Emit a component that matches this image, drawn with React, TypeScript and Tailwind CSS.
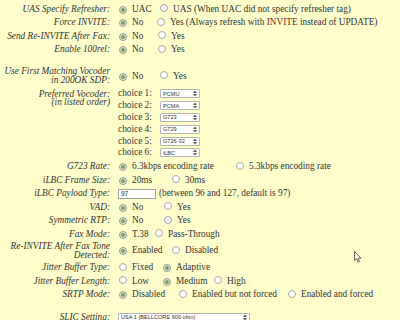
import React from "react";

function Radio({ checked }: { checked?: boolean }) {
  return checked ? (
    <span className="inline-flex shrink-0 items-center justify-center w-[8px] h-[8px] rounded-full border border-[#9b9b9b] bg-[#dfe6d3]">
      <span className="block w-[4px] h-[4px] rounded-full bg-[#7c9e5c]" />
    </span>
  ) : (
    <span className="inline-block shrink-0 w-[8px] h-[8px] rounded-full border border-[#a8a8a8] bg-white" />
  );
}

function Opt({ checked, children, w }: { checked?: boolean; children: React.ReactNode; w?: string }) {
  return (
    <span className={`flex items-center shrink-0 whitespace-nowrap ${w ?? ""}`}>
      <span className="ml-[1px]">
        <Radio checked={checked} />
      </span>
      <span className="ml-[5px]">{children}</span>
    </span>
  );
}

function Row({ label, children, h = "h-[13.5px]" }: { label: React.ReactNode; children?: React.ReactNode; h?: string }) {
  return (
    <div className={`flex items-center ${h}`}>
      <div className="w-[110px] shrink-0 text-right italic leading-[8.7px]">{label}</div>
      <div className="ml-[8px] flex items-center whitespace-nowrap">{children}</div>
    </div>
  );
}

function Arrows() {
  return (
    <svg width="4" height="7" viewBox="0 0 4 7" className="shrink-0">
      <path d="M0 3 L2 0.5 L4 3 Z" fill="#555" />
      <path d="M0 4 L2 6.5 L4 4 Z" fill="#555" />
    </svg>
  );
}

function Select({ value, w }: { value: string; w: string }) {
  return (
    <span className={`flex items-center justify-between h-[9px] ${w} border border-[#b5b5b5] bg-white rounded-[1px] pl-[2px] pr-[2px] font-['Liberation_Sans'] text-[5.6px] leading-[8px] text-[#333]`}>
      <span>{value}</span>
      <Arrows />
    </span>
  );
}

export default function App() {
  const codecs = ["PCMU", "PCMA", "G723", "G729", "G726-32", "iLBC"];
  return (
    <div className="relative w-[400px] h-[320px] overflow-hidden bg-[#ffffcc] text-[#333] font-['Liberation_Serif',serif] text-[9.3px] leading-[9px]">
      <div className="mt-[-12.5px]">
        <Row label="UAC Specify Refresher:" h="h-[15px]">
          <Opt w="w-[41px]">UAC</Opt>
          <Opt checked>UAS</Opt>
        </Row>
        <Row label="UAS Specify Refresher:">
          <Opt checked w="w-[41px]">UAC</Opt>
          <Opt>UAS (When UAC did not specify refresher tag)</Opt>
        </Row>
        <Row label="Force INVITE:">
          <Opt checked w="w-[38px]">No</Opt>
          <Opt>
            Yes (Always refresh with <span className="text-[#7a1a1a]">INVITE</span> instead of UPDATE)
          </Opt>
        </Row>
        <Row label="Send Re-INVITE After Fax:">
          <Opt checked w="w-[39px]">No</Opt>
          <Opt>Yes</Opt>
        </Row>
        <Row label="Enable 100rel:">
          <Opt checked w="w-[39px]">No</Opt>
          <Opt>Yes</Opt>
        </Row>
        <div className="h-[9px]" />
        <Row
          h="h-[21px]"
          label={
            <>
              Use First Matching Vocoder
              <br />
              in 200OK SDP:
            </>
          }
        >
          <Opt checked w="w-[41px]">No</Opt>
          <Opt>Yes</Opt>
        </Row>
        <div className="flex">
          <div className="w-[110px] shrink-0 text-right italic leading-[8.7px] pt-[3px]">
            Preferred Vocoder:
            <br />
            (in listed order)
          </div>
          <div className="ml-[8px] pt-[1.5px] pb-[1px] flex flex-col">
            {codecs.map((c, i) => (
              <div key={c} className="flex items-center h-[11.8px]">
                <span className="w-[42px] shrink-0">choice {i + 1}:</span>
                <Select value={c} w="w-[40px]" />
              </div>
            ))}
          </div>
        </div>
        <Row label="G723 Rate:">
          <Opt checked w="w-[117px]">6.3kbps encoding rate</Opt>
          <Opt>5.3kbps encoding rate</Opt>
        </Row>
        <Row label="iLBC Frame Size:">
          <Opt checked w="w-[53px]">20ms</Opt>
          <Opt>30ms</Opt>
        </Row>
        <Row label="iLBC Payload Type:">
          <span className="flex items-center h-[10px] w-[38px] border border-[#a0a0a0] bg-white pl-[2px] font-['Liberation_Sans'] text-[6.5px] leading-[8px] text-[#222]">
            97
          </span>
          <span className="ml-[3px]">(between 96 and 127, default is 97)</span>
        </Row>
        <Row label="VAD:">
          <Opt checked w="w-[45px]">No</Opt>
          <Opt>Yes</Opt>
        </Row>
        <Row label="Symmetric RTP:">
          <Opt checked w="w-[45px]">No</Opt>
          <Opt>Yes</Opt>
        </Row>
        <Row label="Fax Mode:">
          <Opt checked w="w-[36px]">T.38</Opt>
          <Opt>Pass-Through</Opt>
        </Row>
        <Row
          h="h-[20px]"
          label={
            <>
              Re-INVITE After Fax Tone
              <br />
              Detected:
            </>
          }
        >
          <Opt checked w="w-[53px]">Enabled</Opt>
          <Opt>Disabled</Opt>
        </Row>
        <Row label="Jitter Buffer Type:">
          <Opt w="w-[44px]">Fixed</Opt>
          <Opt checked>Adaptive</Opt>
        </Row>
        <Row label="Jitter Buffer Length:">
          <Opt w="w-[44px]">Low</Opt>
          <Opt checked w="w-[51px]">Medium</Opt>
          <Opt>High</Opt>
        </Row>
        <Row label="SRTP Mode:">
          <Opt checked w="w-[60px]">Disabled</Opt>
          <Opt w="w-[109px]">Enabled but not forced</Opt>
          <Opt>Enabled and forced</Opt>
        </Row>
        <div className="h-[9px]" />
        <Row label="SLIC Setting:" h="h-[14px]">
          <Select value="USA 1 (BELLCORE 600 ohm)" w="w-[132px]" />
        </Row>
      </div>
      <svg
        className="absolute left-[354px] top-[251px]"
        width="8"
        height="12"
        viewBox="0 0 8 12"
      >
        <path d="M0.5 0.5 L0.5 9.5 L2.6 7.6 L4.2 11.2 L5.6 10.6 L4.1 7.1 L7 7.1 Z" fill="#ffffcc" stroke="#555" strokeWidth="0.9" strokeLinejoin="round" />
      </svg>
    </div>
  );
}
